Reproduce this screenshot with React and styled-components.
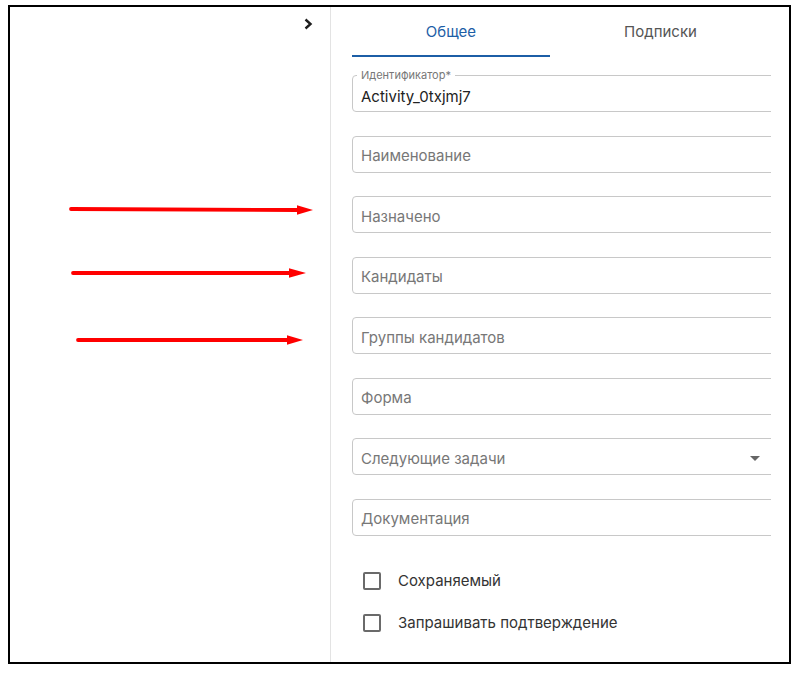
import React from 'react'
import styled, { createGlobalStyle } from 'styled-components'

const GlobalStyle = createGlobalStyle`
  html, body {
    margin: 0;
    padding: 0;
    background: #fff;
  }
  body {
    font-family: Inter, 'Noto Sans', sans-serif;
  }
`

const Frame = styled.div`
  box-sizing: border-box;
  margin: 5px 0 0 8px;
  width: 783px;
  height: 659px;
  border: 2px solid #000;
  display: flex;
  background: #fff;
`

const LeftPane = styled.div`
  position: relative;
  box-sizing: border-box;
  width: 321px;
  border-right: 1px solid #e3e3e3;
  display: flex;
  justify-content: flex-end;
  align-items: flex-start;
  padding: 11px 17px 0 0;
`

const Toggle = styled.button`
  border: 0;
  background: none;
  padding: 0;
  width: 10px;
  height: 12px;
  display: flex;
  cursor: pointer;
`

const Annotations = styled.svg`
  position: absolute;
  left: 0;
  top: 0;
  width: 100%;
  height: 100%;
  pointer-events: none;
`

const RightPane = styled.div`
  flex: 1;
  padding: 0 18px 0 21px;
  min-width: 0;
`

const Clip = styled.div`
  overflow: hidden;
  height: 100%;
`

const TabBar = styled.div`
  display: flex;
  height: 50px;
`

const Tab = styled.div`
  box-sizing: border-box;
  flex: ${(p) => (p.$grow ? 1 : '0 0 198px')};
  display: flex;
  align-items: center;
  justify-content: center;
  font-size: 15px;
  color: ${(p) => (p.$active ? '#1c5ea6' : '#555')};
  border-bottom: 2px solid ${(p) => (p.$active ? '#1c5ea6' : 'transparent')};
  padding-top: 1px;
`

const Fields = styled.div`
  display: flex;
  flex-direction: column;
  gap: 23.5px;
  margin-top: 18px;
  width: calc(100% + 4px);
`

const Field = styled.div`
  position: relative;
  box-sizing: border-box;
  height: 37px;
  border: 1px solid #c8c8c8;
  border-radius: 4px;
  display: flex;
  align-items: center;
  justify-content: space-between;
  padding: ${(p) => (p.$filled ? '6px 14px 0 8px' : '3px 14px 0 8px')};
  font-size: 15px;
  color: ${(p) => (p.$filled ? '#222' : '#777')};
`

const FloatLabel = styled.span`
  position: absolute;
  top: -7px;
  left: 4px;
  padding: 0 4px;
  background: #fff;
  font-size: 11px;
  line-height: 12px;
  color: #777;
`

const Caret = styled.span`
  width: 0;
  height: 0;
  margin-top: 1px;
  border-left: 5px solid transparent;
  border-right: 5px solid transparent;
  border-top: 5px solid #666;
`

const Checks = styled.div`
  display: flex;
  flex-direction: column;
  gap: 24px;
  margin-top: 36px;
  padding-left: 11px;
`

const CheckRow = styled.label`
  display: flex;
  align-items: center;
  gap: 17px;
  font-size: 15px;
  color: #333;
  height: 18px;
`

const Box = styled.span`
  box-sizing: border-box;
  width: 18px;
  height: 18px;
  border: 2px solid #6a6a6a;
  border-radius: 2px;
`

const arrows = [
  { y1: 202, y2: 203, x: 61, base: 287, tip: 303 },
  { y1: 266, y2: 266, x: 63, base: 279, tip: 296 },
  { y1: 333, y2: 333, x: 68, base: 277, tip: 293 },
]

const fields = [
  { label: 'Идентификатор*', value: 'Activity_0txjmj7' },
  { placeholder: 'Наименование' },
  { placeholder: 'Назначено' },
  { placeholder: 'Кандидаты' },
  { placeholder: 'Группы кандидатов' },
  { placeholder: 'Форма' },
  { placeholder: 'Следующие задачи', select: true },
  { placeholder: 'Документация' },
]

const App = () => {
  return (
    <>
      <GlobalStyle />
      <Frame>
        <LeftPane>
          <Toggle aria-label='Expand'>
            <svg width='10' height='12' viewBox='0 0 10 12'>
              <path d='M2.5 1.5 L7.5 6 L2.5 10.5' fill='none' stroke='#1d1d1d' strokeWidth='2.4' />
            </svg>
          </Toggle>
          <Annotations>
            {arrows.map((a, i) => (
              <g key={i} fill='#ff0000' stroke='#ff0000'>
                <line x1={a.x} y1={a.y1} x2={a.base} y2={a.y2} strokeWidth='3.8' strokeLinecap='round' />
                <polygon points={`${a.base},${a.y2 - 4.8} ${a.tip},${a.y2} ${a.base},${a.y2 + 4.8}`} stroke='none' />
              </g>
            ))}
          </Annotations>
        </LeftPane>
        <RightPane>
          <Clip>
            <TabBar>
              <Tab $active>Общее</Tab>
              <Tab $grow>Подписки</Tab>
            </TabBar>
            <Fields>
              {fields.map((f, i) => (
                <Field key={i} $filled={!!f.value}>
                  {f.label && <FloatLabel>{f.label}</FloatLabel>}
                  <span>{f.value || f.placeholder}</span>
                  {f.select && <Caret />}
                </Field>
              ))}
            </Fields>
            <Checks>
              <CheckRow>
                <Box />
                Сохраняемый
              </CheckRow>
              <CheckRow>
                <Box />
                Запрашивать подтверждение
              </CheckRow>
            </Checks>
          </Clip>
        </RightPane>
      </Frame>
    </>
  )
}

export default App
